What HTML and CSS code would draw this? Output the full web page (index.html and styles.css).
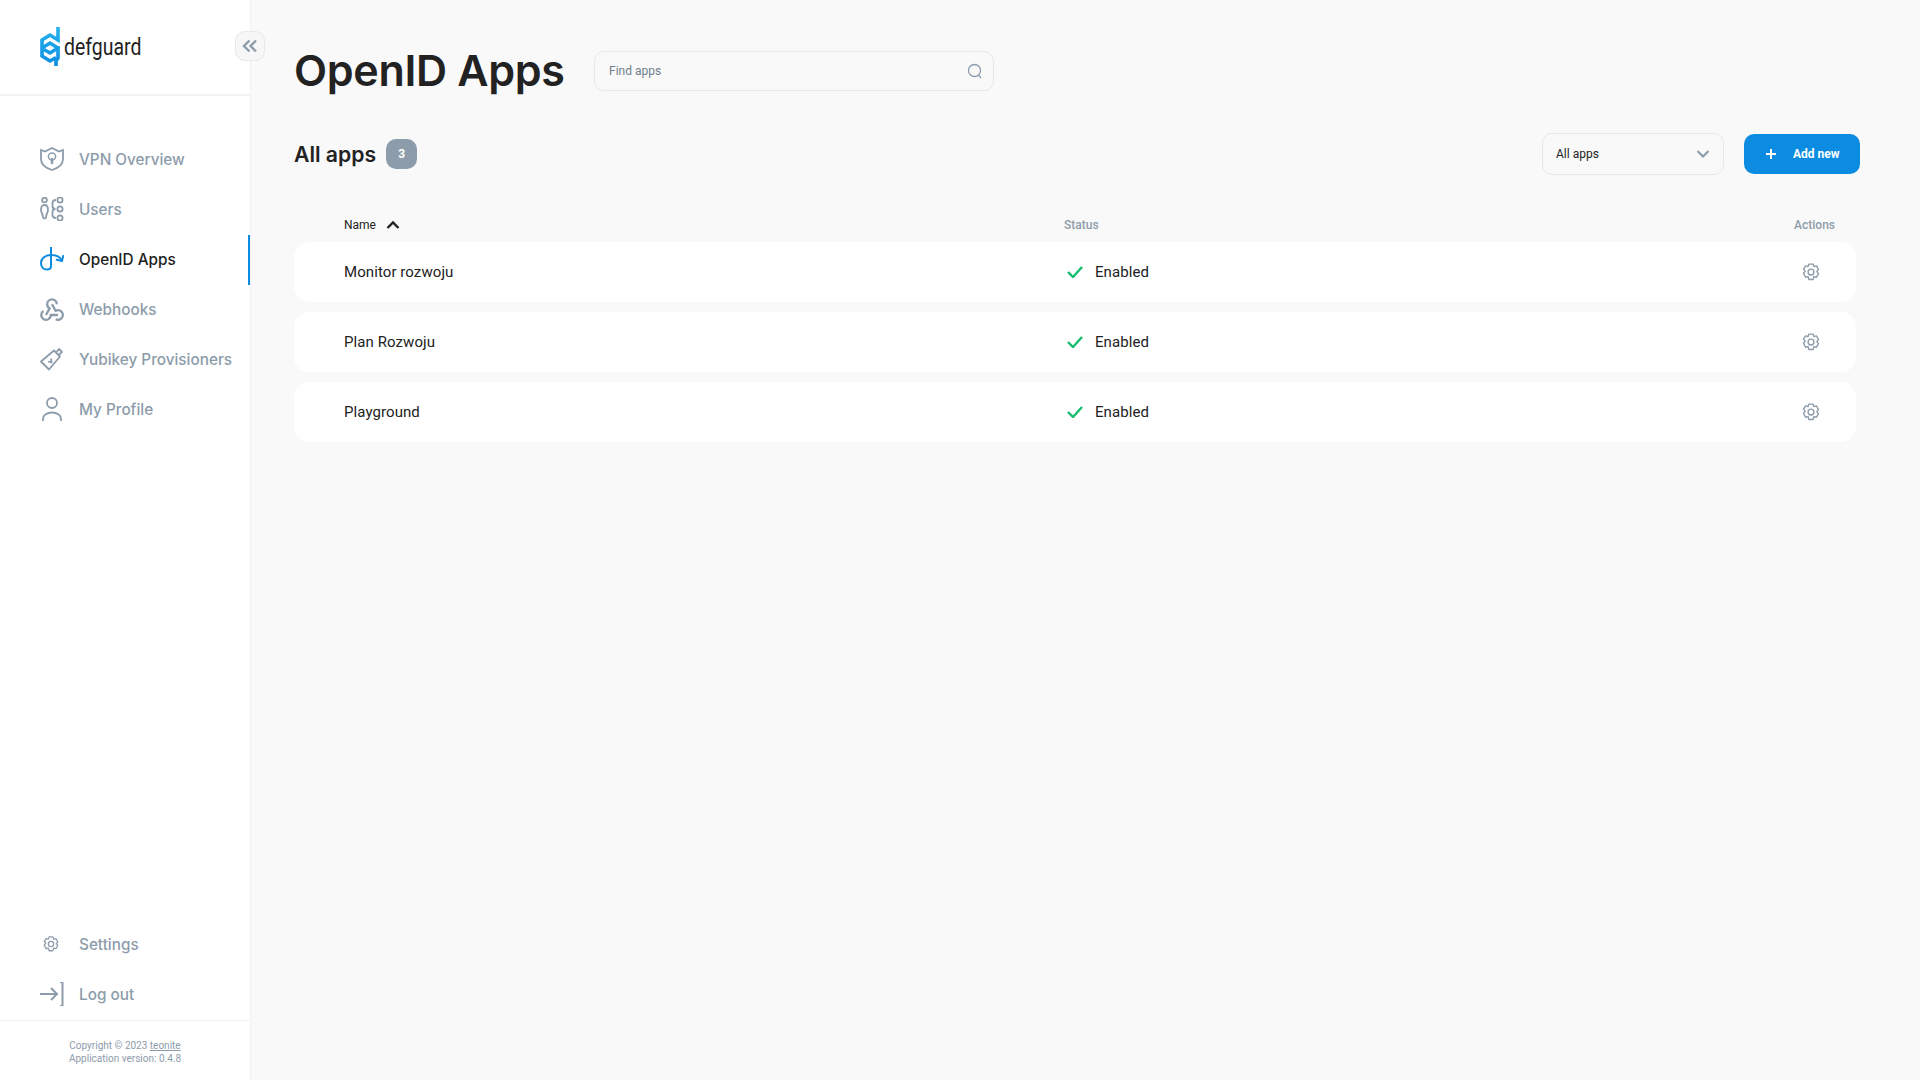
FILE: index.html
```html
<!DOCTYPE html>
<html lang="en">
<head>
  <meta charset="UTF-8">
  <title>OpenID Apps</title>
  <link rel="stylesheet" href="styles.css">
</head>
<body>
  <!-- Sidebar -->
  <aside class="sidebar">
    <div class="logo-row">
      <svg class="logo-mark" viewBox="0 0 20 40" width="20" height="40">
        <defs>
          <linearGradient id="logoBlue" x1="0" y1="0" x2="0" y2="1">
            <stop offset="0" stop-color="#25b4f0"/>
            <stop offset="1" stop-color="#0c8ce0"/>
          </linearGradient>
        </defs>
        <path d="M18 0v13l-8-5-8 5v16l8 5 6-3.500M2 21l8-5 8 5-8 5-6-3.500M18 19v12l-2 3v5" fill="none" stroke="url(#logoBlue)" stroke-width="3.600"/>
      </svg>
      <span class="logo-text">defguard</span>
    </div>
    <button class="collapse-button">
      <svg viewBox="0 0 16 16" width="16" height="16"><path d="M7.500 2.500 2 8l5.500 5.500M14 2.500 8.500 8l5.500 5.500" fill="none" stroke="#8d9caa" stroke-width="2.400"/></svg>
    </button>

    <nav class="nav-main">
      <a class="nav-item">
        <svg class="nav-icon" viewBox="0 0 24 24"><path d="M1 3 5 4.500 12 1l7 3.500L23 3v9c0 5-4.500 9-11 11C5.500 21 1 17 1 12Z" fill="none" stroke="#8d9caa" stroke-width="1.800"/><circle cx="12" cy="9.500" r="3.600" fill="none" stroke="#8d9caa" stroke-width="1.500"/><path d="M12 11v6" stroke="#8d9caa" stroke-width="2.400"/></svg>
        VPN Overview
      </a>
      <a class="nav-item">
        <svg class="nav-icon" viewBox="0 0 24 24"><g fill="none" stroke="#8d9caa" stroke-width="1.800"><circle cx="4.500" cy="3" r="2.400"/><path d="M4.500 8C2 8 1 10 1 13c0 3 2 4 2 7 0 2 3 2 3 0 0-3 2-4 2-7 0-3-1-5-3.500-5Z"/><circle cx="20" cy="3" r="2.600"/><circle cx="20" cy="12" r="2.600"/><circle cx="20" cy="21" r="2.600"/><path d="M16 3c-3 0-3.500 1-3.500 3v3c0 2 .5 3 3 3-2.500 0-3 1-3 3v3c0 2 .5 3 3.500 3"/></g></svg>
        Users
      </a>
      <a class="nav-item active">
        <svg class="nav-icon" viewBox="0 0 24 24"><g fill="none" stroke="#0c8ce0" stroke-width="2"><path d="M11 0v19c0 2.500-1.500 3.500-4 3.500-3.500 0-6-2.500-6-6.500 0-4 3.500-8 10-8"/><path d="M11 8c5 0 9 1.500 11 5.500"/><path d="M23.500 8 22 14l-6-1.500"/></g></svg>
        OpenID Apps
      </a>
      <a class="nav-item">
        <svg class="nav-icon" viewBox="2 2 20 20"><g fill="none" stroke="#8d9caa" stroke-width="1.900"><path d="M4.876 13.61a4 4 0 1 0 6.124 3.390h6"/><path d="M15.066 20.502a4 4 0 1 0 1.934-7.502c-.706 0-1.424 .179-2 .5l-3-5.500"/><path d="M16 8a4 4 0 1 0-8 0c0 1.506 .77 2.818 2 3.500l-3 5.500"/></g></svg>
        Webhooks
      </a>
      <a class="nav-item">
        <svg class="nav-icon" viewBox="0 0 24 24"><g fill="none" stroke="#8d9caa" stroke-width="1.800" stroke-linejoin="round"><path d="M1 14.500 14 3.500l6 6-11 13Z"/><path d="M16 5.500l3-3.500 3 3-3.500 3"/><path d="M8 14.500l3.500 1-.5-4"/></g></svg>
        Yubikey Provisioners
      </a>
      <a class="nav-item">
        <svg class="nav-icon" viewBox="0 0 24 24"><g fill="none" stroke="#8d9caa" stroke-width="1.800"><circle cx="12" cy="6" r="5"/><path d="M3 24v-2c0-4 4-6.500 9-6.500s9 2.500 9 6.500v2"/></g></svg>
        My Profile
      </a>
    </nav>

    <nav class="nav-bottom">
      <a class="nav-item">
        <svg class="nav-icon gear-small" viewBox="0 0 24 24"><use href="#gearIcon"/></svg>
        Settings
      </a>
      <a class="nav-item">
        <svg class="nav-icon" viewBox="0 0 24 24"><g fill="none" stroke="#8d9caa" stroke-width="2"><path d="M0 12h17M11 6l6 6-6 6"/><path d="M20 0h2.500v24H20"/></g></svg>
        Log out
      </a>
    </nav>

    <div class="copyright">
      <div>Copyright © 2023 <u>teonite</u></div>
      <div>Application version: 0.4.8</div>
    </div>
  </aside>

  <!-- Main content -->
  <main class="content">
    <header class="page-header">
      <h1>OpenID Apps</h1>
      <div class="search-box">
        <span>Find apps</span>
        <svg viewBox="0 0 16 16" width="16" height="16"><g fill="none" stroke="#8d9caa" stroke-width="1.300"><circle cx="7.500" cy="7.500" r="6"/><path d="M11.500 12l2.500 3"/></g></svg>
      </div>
    </header>

    <section class="toolbar">
      <h2>All apps</h2>
      <span class="count-badge">3</span>
      <div class="toolbar-right">
        <div class="select-box">
          <span>All apps</span>
          <svg viewBox="0 0 14 10" width="14" height="10"><path d="M1.500 2 7 7.500 12.500 2" fill="none" stroke="#8d9caa" stroke-width="2.200"/></svg>
        </div>
        <button class="add-button">
          <svg viewBox="0 0 12 12" width="12" height="12"><path d="M6 1v10M1 6h10" stroke="#fff" stroke-width="2"/></svg>
          Add new
        </button>
      </div>
    </section>

    <div class="table-head">
      <div class="col-name">Name
        <svg viewBox="0 0 14 10" width="14" height="10"><path d="M1.500 8 7 2.500 12.500 8" fill="none" stroke="#222" stroke-width="2.400"/></svg>
      </div>
      <div class="col-status">Status</div>
      <div class="col-actions">Actions</div>
    </div>

    <div class="table-row">
      <div class="col-name">Monitor rozwoju</div>
      <div class="col-status status-on">
        <svg viewBox="0 0 16 12" width="16" height="12"><path d="M1 6l5 5 9-10" fill="none" stroke="#14bc6e" stroke-width="2.400"/></svg>
        Enabled
      </div>
      <svg class="row-gear" viewBox="0 0 24 24"><use href="#gearIcon"/></svg>
    </div>
    <div class="table-row">
      <div class="col-name">Plan Rozwoju</div>
      <div class="col-status status-on">
        <svg viewBox="0 0 16 12" width="16" height="12"><path d="M1 6l5 5 9-10" fill="none" stroke="#14bc6e" stroke-width="2.400"/></svg>
        Enabled
      </div>
      <svg class="row-gear" viewBox="0 0 24 24"><use href="#gearIcon"/></svg>
    </div>
    <div class="table-row">
      <div class="col-name">Playground</div>
      <div class="col-status status-on">
        <svg viewBox="0 0 16 12" width="16" height="12"><path d="M1 6l5 5 9-10" fill="none" stroke="#14bc6e" stroke-width="2.400"/></svg>
        Enabled
      </div>
      <svg class="row-gear" viewBox="0 0 24 24"><use href="#gearIcon"/></svg>
    </div>
  </main>

  <!-- Shared gear icon -->
  <svg class="icon-defs" width="0" height="0">
    <symbol id="gearIcon" viewBox="0 0 24 24">
      <g fill="none" stroke="#8d9caa" stroke-width="1.700" stroke-linejoin="round">
        <path d="M9.500 1.500h5l1 3 3-.8 2.500 4.300-2 2.500 2 2.500-2.500 4.300-3-.8-1 3.500h-5l-1-3.500-3 .8L3 12.500l2-2.500-2-2.500L5.500 3.700l3 .8Z" transform="translate(0 1)"/>
        <circle cx="12" cy="12" r="3.500"/>
      </g>
    </symbol>
  </svg>
</body>
</html>
```

FILE: styles.css
```css
* {
  box-sizing: border-box;
}

body {
  margin: 0;
  height: 100vh;
  display: flex;
  background: #f9f9f9;
  font-family: Roboto, sans-serif;
  color: #222;
  overflow: hidden;
}

h1, h2 {
  margin: 0;
  font-family: Inter, sans-serif;
}

.icon-defs {
  position: absolute;
}

/* Sidebar */
.sidebar {
  position: relative;
  width: 251px;
  flex-shrink: 0;
  display: flex;
  flex-direction: column;
  background: #fff;
  border-right: 1px solid #f1f1f1;
}

.logo-row {
  height: 96px;
  flex-shrink: 0;
  display: flex;
  align-items: center;
  gap: 4px;
  padding: 0 0 1px 40px;
  border-bottom: 2px solid #f3f3f3;
}

.logo-text {
  font-family: "Liberation Sans Narrow", Roboto, sans-serif;
  font-size: 24px;
  color: #222;
  transform: scaleX(0.81);
  transform-origin: left center;
}

.collapse-button {
  position: absolute;
  top: 31px;
  left: 235px;
  width: 30px;
  height: 30px;
  padding: 0;
  display: flex;
  align-items: center;
  justify-content: center;
  background: #f7f7f7;
  border: 1px solid #e8e8e8;
  border-radius: 10px;
}

.nav-main {
  padding-top: 39px;
  flex: 1;
}

.nav-item {
  height: 50px;
  display: flex;
  align-items: center;
  gap: 15px;
  padding: 0 0 2px 40px;
  font-family: Inter, sans-serif;
  font-size: 15.300px;
  font-weight: 500;
  color: #8d9caa;
  white-space: nowrap;
}

.nav-item.active {
  color: #222;
  border-right: 2px solid #0c8ce0;
}

.nav-icon {
  width: 24px;
  height: 24px;
  flex-shrink: 0;
}

.gear-small {
  padding: 3px;
  transform: translateX(-1px);
}

.copyright {
  height: 60px;
  padding-top: 18px;
  border-top: 1px solid #f1f1f1;
  text-align: center;
  font-size: 10px;
  line-height: 13px;
  color: #8d9caa;
}

/* Main content */
.content {
  flex: 1;
  padding: 0 60px 0 43px;
}

.page-header {
  height: 139px;
  display: flex;
  align-items: center;
  padding-top: 2px;
  gap: 30px;
}

.page-header h1 {
  width: 270px;
  margin-bottom: 2px;
  font-size: 43px;
  font-weight: 600;
  letter-spacing: -0.3px;
  white-space: nowrap;
}

.search-box {
  width: 400px;
  height: 40px;
  display: flex;
  align-items: center;
  justify-content: space-between;
  padding: 0 10px 0 14px;
  border: 1px solid #e8e8e8;
  border-radius: 10px;
  font-size: 12px;
  color: #6f7e8c;
}

.toolbar {
  height: 30px;
  display: flex;
  align-items: center;
  gap: 10px;
}

.toolbar h2 {
  font-size: 21.200px;
  font-weight: 600;
}

.count-badge {
  width: 31px;
  height: 30px;
  display: flex;
  align-items: center;
  justify-content: center;
  background: #8d9caa;
  border-radius: 10px;
  font-size: 12px;
  font-weight: 700;
  color: #fff;
}

.toolbar-right {
  margin-left: auto;
  display: flex;
  align-items: center;
  gap: 20px;
}

.select-box {
  width: 182px;
  height: 42px;
  display: flex;
  align-items: center;
  justify-content: space-between;
  padding: 0 13px;
  border: 1px solid #e8e8e8;
  border-radius: 10px;
  font-size: 12px;
}

.add-button {
  width: 116px;
  height: 40px;
  display: flex;
  align-items: center;
  gap: 16px;
  padding: 0 0 0 21px;
  background: #0c8ce0;
  border: none;
  border-radius: 10px;
  font-family: Roboto, sans-serif;
  font-size: 12px;
  font-weight: 700;
  color: #fff;
}

.table-head {
  height: 32px;
  margin-top: 41px;
  padding: 0 0 2px 50px;
  display: flex;
  align-items: center;
  font-size: 12px;
  font-weight: 500;
  color: #8d9caa;
}

.table-head .col-name {
  display: flex;
  align-items: center;
  gap: 10px;
  color: #222;
  font-weight: 400;
}

.col-name {
  width: 720px;
}

.col-status {
  width: 400px;
}

.col-actions {
  width: 371px;
  text-align: right;
  white-space: nowrap;
}

.table-row {
  width: 1562px;
  height: 60px;
  margin-bottom: 10px;
  display: flex;
  align-items: center;
  padding-left: 50px;
  background: #fff;
  border-radius: 15px;
  font-size: 15px;
  letter-spacing: 0.08px;
}

.status-on {
  display: flex;
  align-items: center;
  gap: 12px;
  padding-left: 3px;
}

.row-gear {
  width: 20px;
  height: 20px;
  margin-left: 337px;
}
```
